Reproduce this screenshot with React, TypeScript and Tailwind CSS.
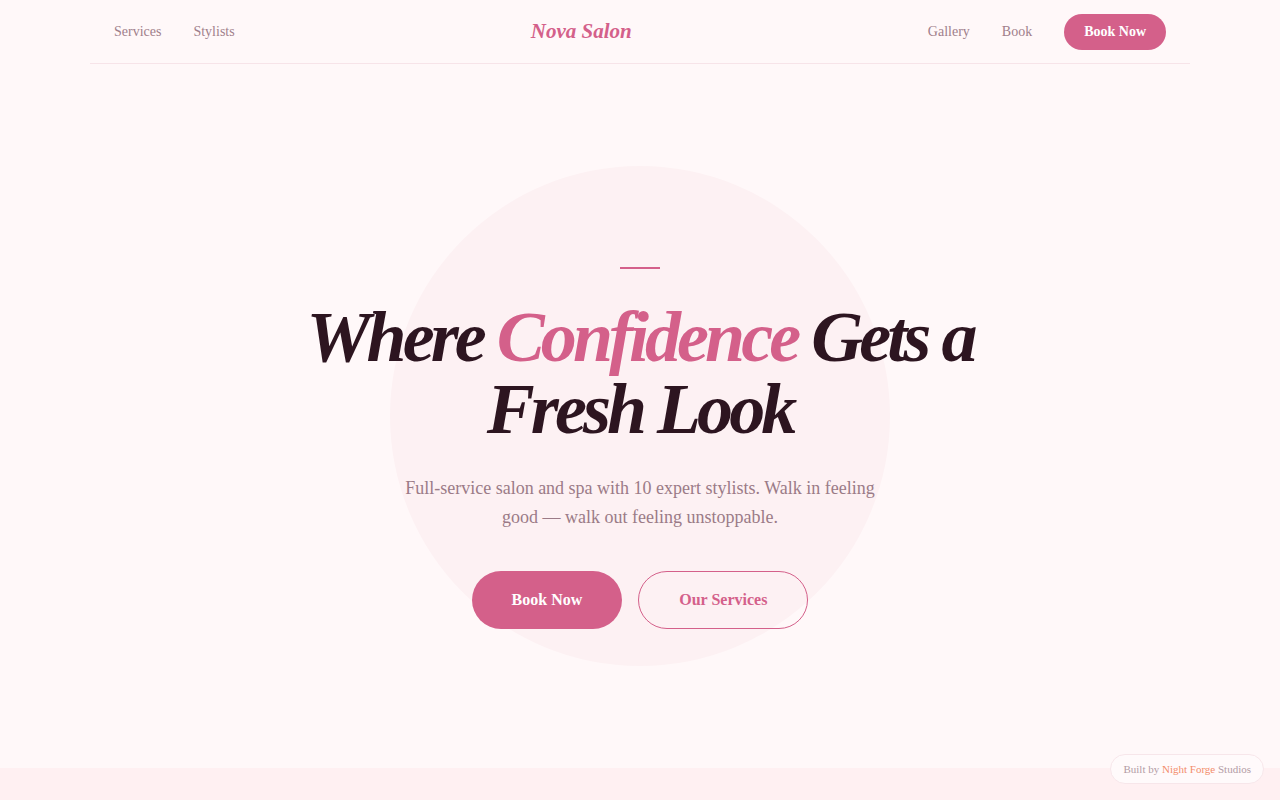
import React from "react";

export default function App() {
  const serif = { fontFamily: '"Liberation Serif", "Times New Roman", serif' };
  return (
    <div className="min-h-screen bg-[#fff8f9] text-[#2d1520]" style={serif}>
      <header className="mx-auto max-w-[1100px] border-b border-[#f7e4e9]">
        <nav className="flex h-[63px] items-center justify-between px-6">
          <div className="flex items-center gap-8 text-[14px] text-[#9f7f8b]">
            <a>Services</a>
            <a>Stylists</a>
          </div>
          <div className="text-[21px] font-bold italic text-[#d4608a]">Nova Salon</div>
          <div className="flex items-center gap-8 text-[14px] text-[#9f7f8b]">
            <a>Gallery</a>
            <a>Book</a>
            <button className="rounded-full bg-[#d4608a] px-5 py-2 text-[14px] font-bold leading-5 text-white">
              Book Now
            </button>
          </div>
        </nav>
      </header>

      <section className="relative flex h-[704px] flex-col items-center justify-center overflow-hidden pt-[64px]">
        <div className="pointer-events-none absolute left-1/2 top-1/2 h-[500px] w-[500px] -translate-x-1/2 -translate-y-1/2 rounded-full bg-[#fdf1f3]" />
        <div className="relative flex flex-col items-center text-center">
          <div className="mb-8 h-[2px] w-10 bg-[#d4608a]" />
          <h1 className="text-[72px] font-bold italic leading-none tracking-[-0.055em] text-[#2d1520]">
            Where <span className="text-[#d4608a]">Confidence</span> Gets a
            <br />
            Fresh Look
          </h1>
          <p className="mt-[29px] max-w-[480px] text-[18px] leading-[1.6] text-[#9b7b87]">
            Full-service salon and spa with 10 expert stylists. Walk in feeling good — walk out feeling unstoppable.
          </p>
          <div className="mt-10 flex items-center gap-4">
            <button className="rounded-full bg-[#d4608a] px-10 py-[17px] text-[16px] font-bold leading-6 text-white">
              Book Now
            </button>
            <button className="rounded-full border border-[#d4608a] px-10 py-[16px] text-[16px] font-bold leading-6 text-[#d4608a]">
              Our Services
            </button>
          </div>
        </div>
      </section>

      <section className="h-[400px] bg-[#fff0f2]" />

      <div className="fixed bottom-4 right-4 rounded-full border border-[#f7e6ea] bg-[#fffafb] px-3 py-[6px] text-[11px] leading-4 text-[#b39ca5]">
        Built by <span className="text-[#f38d6b]">Night Forge</span> Studios
      </div>
    </div>
  );
}
